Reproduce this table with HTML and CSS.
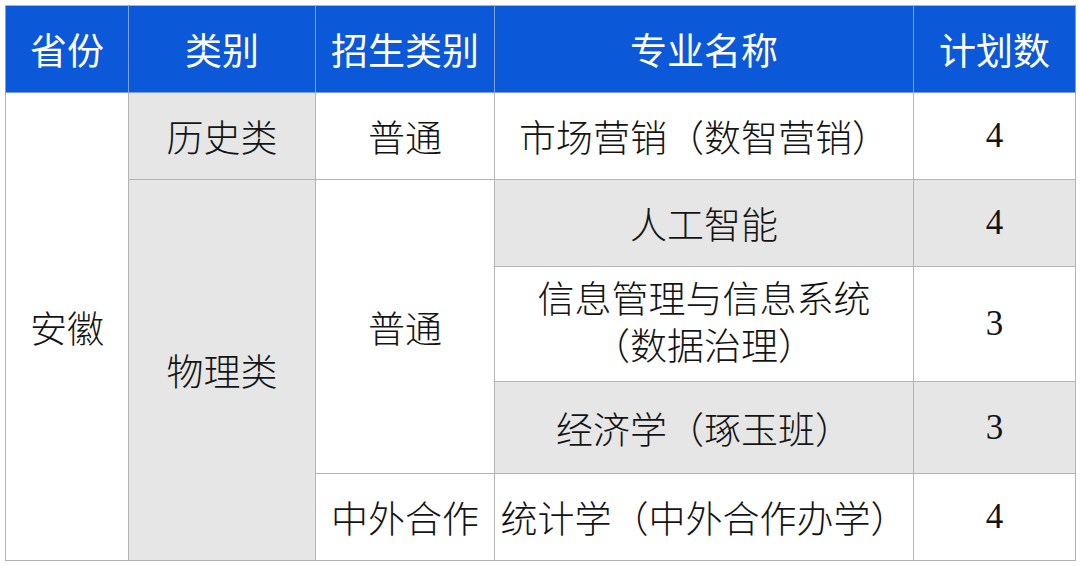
FILE: index.html
```html
<!DOCTYPE html>
<html lang="zh-CN">
<head>
<meta charset="utf-8">
<link rel="stylesheet" href="styles.css">
</head>
<body>
<table class="plan">
  <colgroup>
    <col class="c1"><col class="c2"><col class="c3"><col class="c4"><col class="c5">
  </colgroup>
  <thead>
    <tr class="h">
      <th>省份</th><th>类别</th><th>招生类别</th><th>专业名称</th><th>计划数</th>
    </tr>
  </thead>
  <tbody>
    <tr class="r1">
      <td rowspan="5">安徽</td>
      <td class="g">历史类</td>
      <td>普通</td>
      <td>市场营销（数智营销）</td>
      <td class="num">4</td>
    </tr>
    <tr class="r2">
      <td class="g" rowspan="4">物理类</td>
      <td rowspan="3">普通</td>
      <td class="g">人工智能</td>
      <td class="g num">4</td>
    </tr>
    <tr class="r3">
      <td class="two">信息管理与信息系统<br>（数据治理）</td>
      <td class="num">3</td>
    </tr>
    <tr class="r4">
      <td class="g">经济学（琢玉班）</td>
      <td class="g num">3</td>
    </tr>
    <tr class="r5">
      <td>中外合作</td>
      <td>统计学（中外合作办学）</td>
      <td class="num">4</td>
    </tr>
  </tbody>
</table>
</body>
</html>
```
FILE: styles.css
```css
html, body {
  margin: 0;
  padding: 0;
  background: #ffffff;
}
body {
  padding: 5px;
}
.plan {
  border-collapse: collapse;
  table-layout: fixed;
  width: 1071px;
  font-family: "Liberation Serif", "Noto Sans CJK SC", serif;
  font-size: 37px;
  font-weight: 300;
  color: #141414;
}
.c1 { width: 123px; }
.c2 { width: 187px; }
.c3 { width: 179px; }
.c4 { width: 419px; }
.c5 { width: 162px; }
.plan th, .plan td {
  border: 1px solid #b4b4b4;
  text-align: center;
  vertical-align: middle;
  padding: 0;
  font-weight: 300;
  white-space: nowrap;
  overflow: visible;
}
.plan th {
  background: #0b58d8;
  color: #ffffff;
  font-family: "Noto Sans CJK SC", sans-serif;
  font-size: 37px;
  font-weight: normal;
  border-color: #7d9fdc;
  border-top-color: #b4b4b4;
}
.h { height: 87px; }
.r1 { height: 87px; }
.r2 { height: 87px; }
.r3 { height: 115px; }
.r4 { height: 92px; }
.r5 { height: 87px; }
.g { background: #e6e6e6; }
.two { line-height: 47px; }
.num { font-size: 35px; font-weight: normal; }
```
